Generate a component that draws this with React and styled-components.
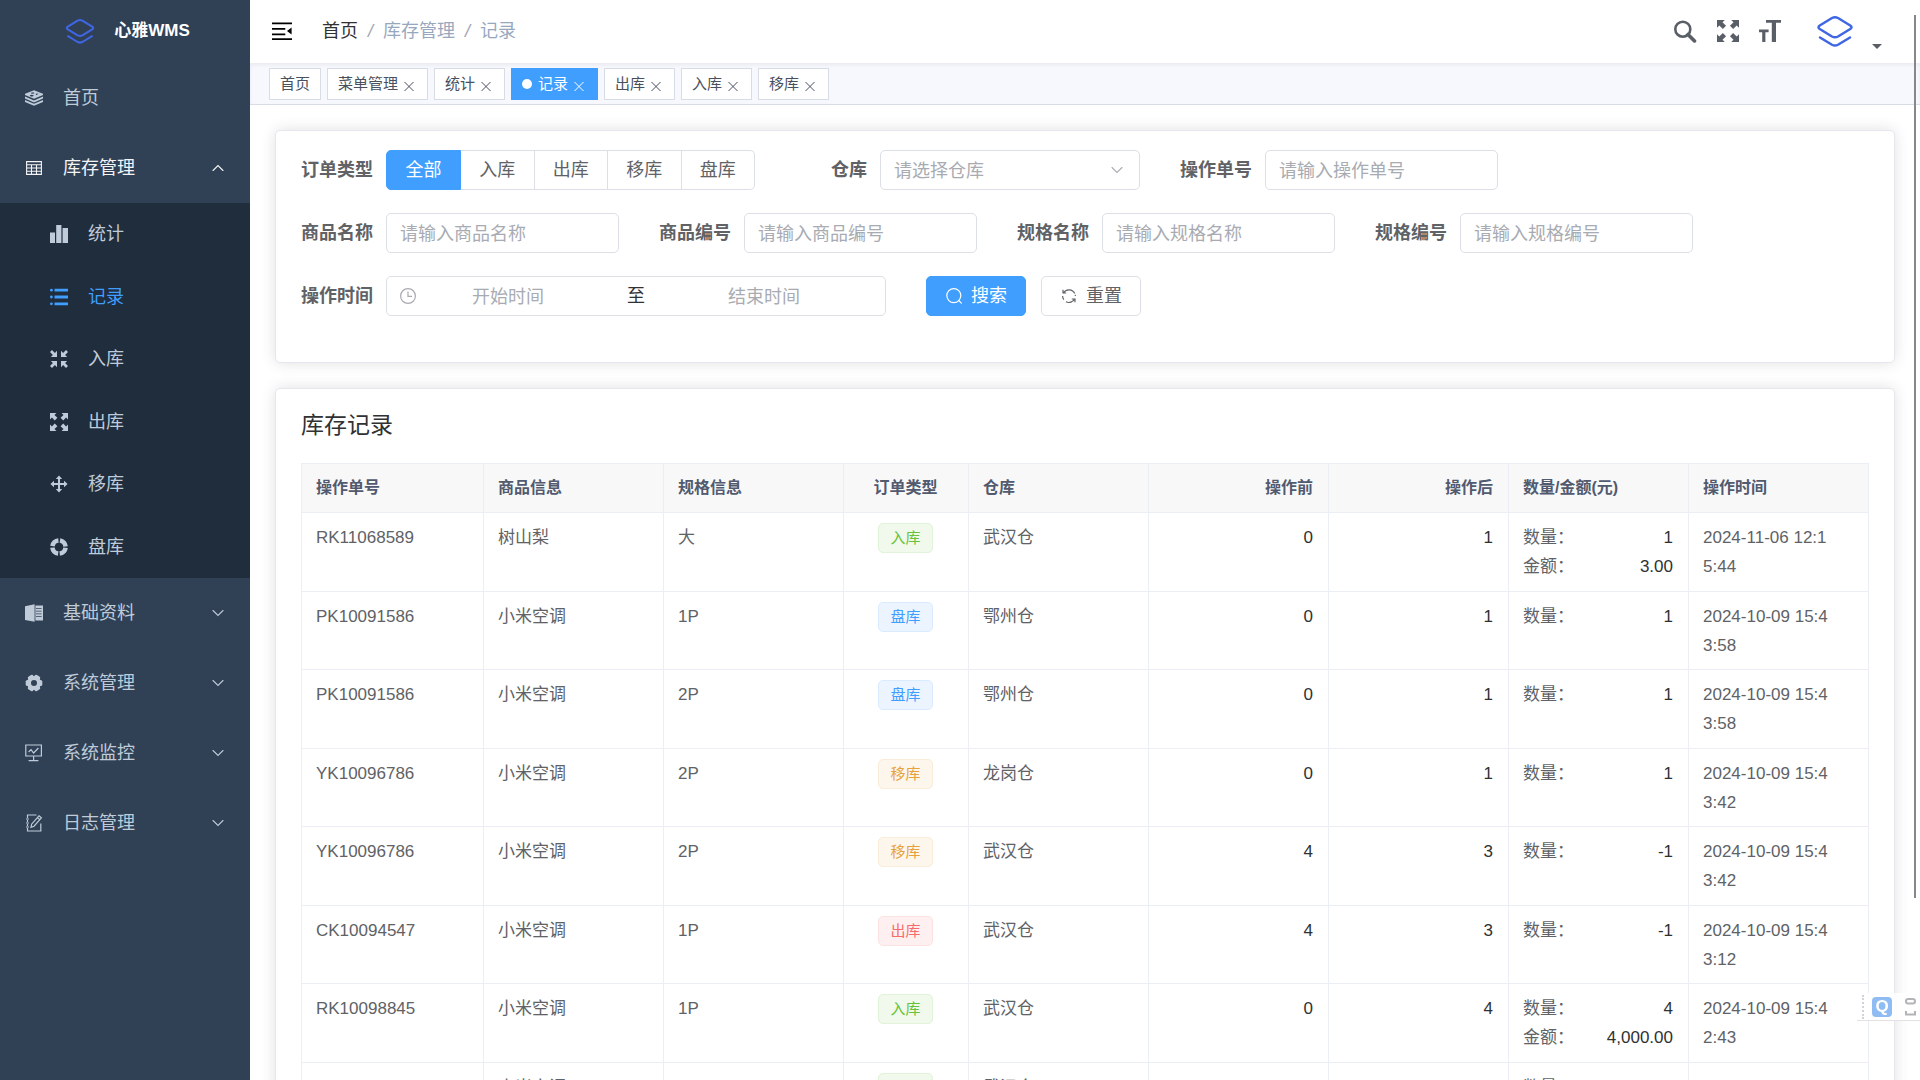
import React from 'react'
import { useState } from 'react';
import styled, { createGlobalStyle } from 'styled-components';

const GlobalStyle = createGlobalStyle`
  * {
    box-sizing: border-box;
  }

  body {
    margin: 0;
    background: #fff;
    color: #303133;
    font-family: "Liberation Sans", "Noto Sans CJK SC", sans-serif;
    font-size: 18px;
    line-height: 28px;
  }

  button, input, select {
    font: inherit;
    color: inherit;
  }

  a {
    color: inherit;
    text-decoration: none;
  }
`;

const Svg = styled.svg`
  display: block;
  flex: none;
  width: ${({ $size }) => $size || 18}px;
  height: ${({ $size }) => $size || 18}px;
  fill: ${({ $line }) => ($line ? 'none' : 'currentColor')};
  stroke: ${({ $line }) => ($line ? 'currentColor' : 'none')};
`;

const LogoSvg = styled(Svg)`
  stroke: #3f66e4;
`;

const LogoMark = ({ size }) => (
  <LogoSvg $size={size} $line viewBox="0 0 40 40" strokeWidth="2" strokeLinejoin="round" strokeLinecap="round" aria-hidden="true">
    <path d="M17.6 9.6 7.8 15.6Q5.8 17 7.8 18.400L17.600 24.400Q20 25.600 22.400 24.400L32.200 18.400Q34.200 17 32.200 15.600L22.400 9.600Q20 8.400 17.600 9.600Z" />
    <path d="M8 25.200 17.600 31Q20 32.200 22.400 31L32 25.200" />
  </LogoSvg>
);

const StackIcon = () => (
  <Svg viewBox="0 0 18 18">
    <path fillRule="evenodd" d="M9 1.200 18 4.800V6L9 9.800 0 6V4.800ZM6 3.800 8.600 3.300 9.200 4.400 6.500 4.800ZM10.600 4.800 13.600 4.400 11.400 6.200ZM5 6.200A2 .8 0 1 0 8.400 6.200 2 .8 0 0 0 5 6.200Z" />
    <path d="M0 7.600 9 11.400 18 7.600V9.600L9 13.400 0 9.600Z" />
    <path d="M0 11 9 14.800 18 11V13L9 16.800 0 13Z" />
  </Svg>
);

const GridIcon = () => (
  <Svg $line viewBox="0 0 18 18" strokeWidth="1.100">
    <path d="M1.600 2.600H16.400V15.400H1.600ZM1.600 5.800H16.400M1.600 9H16.400M1.600 12.200H16.400M6.500 5.800V15.400M11.500 5.800V15.400" />
  </Svg>
);

const BarsIcon = () => (
  <Svg viewBox="0 0 18 18">
    <path d="M0 7.500H5V18H0ZM6.200 0H11.400V18H6.200ZM12.600 3H18V18H12.600Z" />
  </Svg>
);

const ListIcon = () => (
  <Svg viewBox="0 0 18 18">
    <path d="M4.500.8H18V3.600H4.500ZM4.500 7.600H18V10.400H4.500ZM4.500 14.400H18V17.200H4.500Z" />
    <circle cx="1.400" cy="2.200" r="1.400" />
    <circle cx="1.400" cy="9" r="1.400" />
    <circle cx="1.400" cy="15.800" r="1.400" />
  </Svg>
);

const arrowCorner = 'M0 0H6.400L4.500 1.900 7.400 4.800 4.800 7.400 1.900 4.500 0 6.400Z';

const ExpandIcon = ({ size }) => (
  <Svg $size={size} viewBox="0 0 18 18">
    <path d={arrowCorner} />
    <path d={arrowCorner} transform="rotate(90 9 9)" />
    <path d={arrowCorner} transform="rotate(180 9 9)" />
    <path d={arrowCorner} transform="rotate(270 9 9)" />
  </Svg>
);

const shrinkCorner = 'M7 7H.8L2.900 4.900 0 2 2 0 4.900 2.900 7 .8Z';

const ShrinkIcon = () => (
  <Svg viewBox="0 0 18 18">
    <path d={shrinkCorner} />
    <path d={shrinkCorner} transform="rotate(90 9 9)" />
    <path d={shrinkCorner} transform="rotate(180 9 9)" />
    <path d={shrinkCorner} transform="rotate(270 9 9)" />
  </Svg>
);

const MoveIcon = () => (
  <Svg viewBox="0 0 18 18">
    <path d="M9 .4 12.200 4H10V8H14V5.800L17.600 9 14 12.200V10H10V14H12.200L9 17.600 5.800 14H8V10H4V12.200L.4 9 4 5.800V8H8V4H5.800Z" />
  </Svg>
);

const RingIcon = () => (
  <Svg $line viewBox="0 0 18 18">
    <circle cx="9" cy="9" r="6.600" strokeWidth="4.600" strokeDasharray="8.767 1.600" strokeDashoffset="-0.800" />
  </Svg>
);

const BookIcon = () => (
  <Svg viewBox="0 0 18 18">
    <path d="M0 2.200 9.600.2V17.800L0 16Z" />
    <path fillRule="evenodd" d="M10.400 1.600H18V16.400H10.400ZM11 4.200V5H16.600V4.200ZM11 6.800V7.600H16.600V6.800ZM11 9.400V10.200H16.600V9.400ZM11 12V12.800H16.600V12Z" />
  </Svg>
);

const GearIcon = () => (
  <Svg $line viewBox="0 0 18 18">
    <circle cx="9" cy="9" r="5" strokeWidth="4" />
    {[0, 60, 120, 180, 240, 300].map((deg) => (
      <path key={deg} d="M15.600 7.600V10.400" strokeWidth="3.400" strokeLinejoin="round" strokeLinecap="round" transform={`rotate(${deg} 9 9)`} />
    ))}
  </Svg>
);

const MonitorIcon = () => (
  <Svg $line viewBox="0 0 18 18" strokeWidth="1.200">
    <path d="M.8 1H16.400V12H.8ZM8.600 12V16.400M3.600 16.600H13.400M3.600 8 6 5.600 8.600 9 13.400 4" />
  </Svg>
);

const NoteIcon = () => (
  <Svg $line viewBox="0 0 18 18" strokeWidth="1.200">
    <path d="M11.500 1H2.500V4M2.500 6V8M2.500 10V12M2.500 14V17H15.800V9.500M1 5H4M1 9H4M1 13H4" />
    <path d="M14 1.800 16.400 3.800 9 12.200 6 13.400 6.600 10.200ZM12.400 3.600 14.800 5.600" />
  </Svg>
);

const Chevron = ({ up }) => (
  <Svg $size={14} $line viewBox="0 0 14 14" strokeWidth="1.100" strokeLinecap="round">
    <path d={up ? 'M2 9.500 7 4.500 12 9.500' : 'M2 4.500 7 9.500 12 4.500'} />
  </Svg>
);

const CloseIcon = () => (
  <Svg $size={16} $line viewBox="0 0 16 16" strokeWidth="1">
    <path d="M3.500 6 12.500 15M12.500 6 3.500 15" />
  </Svg>
);

const FoldIcon = () => (
  <Svg $size={20} viewBox="0 0 20 20">
    <path d="M0 1.400H20V3.200H0ZM0 7H13.300V8.800H0ZM0 12.400H13.300V14.200H0ZM0 17.200H20V19H0ZM19.600 6.600V13.400L15 10Z" />
  </Svg>
);

const MagnifierIcon = () => (
  <Svg $size={24} $line viewBox="0 0 24 24">
    <circle cx="9.800" cy="10.200" r="7.500" strokeWidth="2.600" />
    <path d="M15 15.400 21.500 21.900" strokeWidth="3.600" strokeLinecap="round" />
  </Svg>
);

const FontSizeIcon = () => (
  <Svg $size={22} viewBox="0 0 22 22">
    <path d="M7 0H22V2.800H17V22H12.800V2.800H7ZM0 9.600H9.600V12.200H6.400V22H3.200V12.200H0Z" />
  </Svg>
);

const SearchIcon = () => (
  <Svg $line viewBox="0 0 18 18" strokeWidth="1.200" strokeLinecap="round">
    <circle cx="8.800" cy="8.600" r="7" />
    <path d="M13.800 13.600 16.400 16.200" />
  </Svg>
);

const RefreshIcon = () => (
  <Svg $line viewBox="0 0 18 18" strokeWidth="1.200">
    <path d="M3 2.800V6H6.200M3.400 6A6.400 6.400 0 0 1 14.800 6.600M2.600 9A6.400 6.400 0 0 0 3.800 12.700M15 15.200V12H11.800M14.600 12A6.400 6.400 0 0 1 6 14.800M15.400 9A6.400 6.400 0 0 0 15.200 7.800" />
  </Svg>
);

const ClockIcon = () => (
  <Svg $line viewBox="0 0 18 18" strokeWidth="1.200">
    <circle cx="9" cy="9" r="7.400" />
    <path d="M9 4.600V9.400H13" />
  </Svg>
);

const stockMenu = [
  { label: '统计', icon: <BarsIcon /> },
  { label: '记录', icon: <ListIcon />, active: true },
  { label: '入库', icon: <ShrinkIcon /> },
  { label: '出库', icon: <ExpandIcon /> },
  { label: '移库', icon: <MoveIcon /> },
  { label: '盘库', icon: <RingIcon /> },
];

const closedMenus = [
  { label: '基础资料', icon: <BookIcon /> },
  { label: '系统管理', icon: <GearIcon /> },
  { label: '系统监控', icon: <MonitorIcon /> },
  { label: '日志管理', icon: <NoteIcon /> },
];

const tabs = ['首页', '菜单管理', '统计', '记录', '出库', '入库', '移库'];

const orderTypes = ['全部', '入库', '出库', '移库', '盘库'];

const tagColors = {
  入库: { text: '#67c23a', bg: '#f0f9eb', border: '#e1f3d8' },
  盘库: { text: '#409eff', bg: '#ecf5ff', border: '#d9ecff' },
  移库: { text: '#e6a23c', bg: '#fdf6ec', border: '#faecd8' },
  出库: { text: '#f56c6c', bg: '#fef0f0', border: '#fde2e2' },
};

const records = [
  { no: 'RK11068589', goods: '树山梨', spec: '大', type: '入库', store: '武汉仓', before: 0, after: 1, qty: '1', amount: '3.00', time: '2024-11-06 12:15:44' },
  { no: 'PK10091586', goods: '小米空调', spec: '1P', type: '盘库', store: '鄂州仓', before: 0, after: 1, qty: '1', time: '2024-10-09 15:43:58' },
  { no: 'PK10091586', goods: '小米空调', spec: '2P', type: '盘库', store: '鄂州仓', before: 0, after: 1, qty: '1', time: '2024-10-09 15:43:58' },
  { no: 'YK10096786', goods: '小米空调', spec: '2P', type: '移库', store: '龙岗仓', before: 0, after: 1, qty: '1', time: '2024-10-09 15:43:42' },
  { no: 'YK10096786', goods: '小米空调', spec: '2P', type: '移库', store: '武汉仓', before: 4, after: 3, qty: '-1', time: '2024-10-09 15:43:42' },
  { no: 'CK10094547', goods: '小米空调', spec: '1P', type: '出库', store: '武汉仓', before: 4, after: 3, qty: '-1', time: '2024-10-09 15:43:12' },
  { no: 'RK10098845', goods: '小米空调', spec: '1P', type: '入库', store: '武汉仓', before: 0, after: 4, qty: '4', amount: '4,000.00', time: '2024-10-09 15:42:43' },
  { no: 'RK10098845', goods: '小米空调', spec: '2P', type: '入库', store: '武汉仓', before: 0, after: 4, qty: '4', amount: '4,000.00', time: '2024-10-09 15:42:43' },
];

const TextField = ({ id, label }) => (
  <FormItem>
    <FormLabel htmlFor={id}>{label}</FormLabel>
    <TextInput id={id} type="text" placeholder={`请输入${label}`} />
  </FormItem>
);

const App = () => {
  const [orderType, setOrderType] = useState('全部');

  return (
    <Layout>
      <GlobalStyle />
      <Sidebar>
        <Brand href="#">
          <LogoMark size={40} />
          心雅WMS
        </Brand>
        <nav>
          <MenuLink href="#"><StackIcon />首页</MenuLink>
          <MenuButton type="button" $open aria-expanded="true">
            <GridIcon />
            <span>库存管理</span>
            <Chevron up />
          </MenuButton>
          <SubMenu>
            {stockMenu.map((item) => (
              <SubLink key={item.label} href="#" $active={item.active}>
                {item.icon}
                {item.label}
              </SubLink>
            ))}
          </SubMenu>
          {closedMenus.map((item) => (
            <MenuButton key={item.label} type="button" aria-expanded="false">
              {item.icon}
              <span>{item.label}</span>
              <Chevron />
            </MenuButton>
          ))}
        </nav>
      </Sidebar>

      <Main>
        <Navbar>
          <IconButton type="button" aria-label="折叠菜单" $dark><FoldIcon /></IconButton>
          <Breadcrumb>
            <a href="#">首页</a>
            <i>/</i>
            <span>库存管理</span>
            <i>/</i>
            <span>记录</span>
          </Breadcrumb>
          <Tools>
            <IconButton type="button" aria-label="搜索菜单"><MagnifierIcon /></IconButton>
            <IconButton type="button" aria-label="全屏"><ExpandIcon size={22} /></IconButton>
            <IconButton type="button" aria-label="字体大小"><FontSizeIcon /></IconButton>
            <UserButton type="button" aria-label="用户菜单">
              <LogoMark size={50} />
              <Caret />
            </UserButton>
          </Tools>
        </Navbar>

        <TagsBar>
          {tabs.map((tab) => (
            <PageTag key={tab} $active={tab === '记录'}>
              {tab === '记录' && <Dot />}
              <a href="#">{tab}</a>
              {tab !== '首页' && (
                <CloseButton type="button" aria-label={`关闭${tab}`}><CloseIcon /></CloseButton>
              )}
            </PageTag>
          ))}
        </TagsBar>

        <Content>
          <Card>
            <SearchForm onSubmit={(e) => e.preventDefault()}>
              <FormItem role="radiogroup" aria-labelledby="order-type">
                <FormLabel as="span" id="order-type">订单类型</FormLabel>
                <RadioGroup>
                  {orderTypes.map((type) => (
                    <RadioButton key={type} $checked={type === orderType}>
                      <input
                        type="radio"
                        name="orderType"
                        value={type}
                        checked={type === orderType}
                        onChange={() => setOrderType(type)}
                      />
                      {type}
                    </RadioButton>
                  ))}
                </RadioGroup>
              </FormItem>
              <FormItem>
                <FormLabel htmlFor="warehouse">仓库</FormLabel>
                <SelectBox>
                  <select id="warehouse" defaultValue="">
                    <option value="">请选择仓库</option>
                    <option>武汉仓</option>
                    <option>鄂州仓</option>
                    <option>龙岗仓</option>
                  </select>
                  <Chevron />
                </SelectBox>
              </FormItem>
              <TextField id="order-no" label="操作单号" />
              <TextField id="goods-name" label="商品名称" />
              <TextField id="goods-no" label="商品编号" />
              <TextField id="spec-name" label="规格名称" />
              <TextField id="spec-no" label="规格编号" />
              <FormItem>
                <FormLabel htmlFor="start-time">操作时间</FormLabel>
                <DateRange>
                  <ClockIcon />
                  <input id="start-time" type="text" placeholder="开始时间" />
                  <span>至</span>
                  <input type="text" placeholder="结束时间" aria-label="结束时间" />
                </DateRange>
              </FormItem>
              <Actions>
                <Button type="submit" $primary><SearchIcon />搜索</Button>
                <Button type="reset"><RefreshIcon />重置</Button>
              </Actions>
            </SearchForm>
          </Card>

          <Card>
            <CardTitle>库存记录</CardTitle>
            <Table>
              <colgroup>
                <Col $w={182} />
                <Col $w={180} />
                <Col $w={180} />
                <Col $w={125} />
                <Col $w={180} />
                <Col $w={180} />
                <Col $w={180} />
                <Col $w={180} />
                <Col $w={180} />
              </colgroup>
              <thead>
                <tr>
                  <Th>操作单号</Th>
                  <Th>商品信息</Th>
                  <Th>规格信息</Th>
                  <Th $align="center">订单类型</Th>
                  <Th>仓库</Th>
                  <Th $align="right">操作前</Th>
                  <Th $align="right">操作后</Th>
                  <Th>数量/金额(元)</Th>
                  <Th>操作时间</Th>
                </tr>
              </thead>
              <tbody>
                {records.map((row, index) => (
                  <Row key={index}>
                    <Td>{row.no}</Td>
                    <Td>{row.goods}</Td>
                    <Td>{row.spec}</Td>
                    <Td $align="center"><Tag $color={tagColors[row.type]}>{row.type}</Tag></Td>
                    <Td>{row.store}</Td>
                    <Td $align="right" $strong>{row.before}</Td>
                    <Td $align="right" $strong>{row.after}</Td>
                    <Td>
                      <Pair><span>数量：</span><b>{row.qty}</b></Pair>
                      {row.amount && <Pair><span>金额：</span><b>{row.amount}</b></Pair>}
                    </Td>
                    <Td><Time>{row.time}</Time></Td>
                  </Row>
                ))}
              </tbody>
            </Table>
          </Card>
        </Content>
      </Main>

      <ScrollThumb />
      <ImeBar>
        <ImeGrip />
        <ImeLogo>Q</ImeLogo>
        <ImeKeys $size={20} $line viewBox="0 0 20 20" strokeWidth="2">
          <rect x="6" y="2" width="9" height="4.500" rx="2.200" />
          <path d="M6 14V17.500H15V14" />
        </ImeKeys>
      </ImeBar>
    </Layout>
  )
}

const Layout = styled.div`
  display: flex;
  height: 100vh;
  overflow: hidden;
`;

const Sidebar = styled.aside`
  flex: none;
  width: 250px;
  background: #304156;
  color: #bfcbd9;
`;

const Brand = styled.a`
  display: flex;
  align-items: center;
  justify-content: center;
  gap: 14px;
  height: 63px;
  padding-bottom: 2px;
  color: #fff;
  font-size: 17px;
  font-weight: 700;
`;

const MenuLink = styled.a`
  display: flex;
  align-items: center;
  gap: 20px;
  height: 70px;
  padding: 0 25px;
`;

const MenuButton = styled.button`
  display: flex;
  align-items: center;
  gap: 20px;
  width: 100%;
  height: 70px;
  padding: 0 25px;
  border: 0;
  background: none;
  color: ${({ $open }) => ($open ? '#f4f4f5' : '#bfcbd9')};
  text-align: left;

  span {
    flex: 1;
  }
`;

const SubMenu = styled.div`
  display: grid;
  grid-template-rows: repeat(6, 1fr);
  height: 375px;
  background: #1f2d3d;
`;

const SubLink = styled.a`
  display: flex;
  align-items: center;
  gap: 20px;
  padding-left: 50px;
  color: ${({ $active }) => ($active ? '#409eff' : '#bfcbd9')};
`;

const Main = styled.main`
  flex: 1;
  min-width: 0;
  overflow-y: auto;
  scrollbar-width: none;
`;

const Navbar = styled.header`
  display: flex;
  align-items: center;
  height: 63px;
  padding: 0 38px 2px 22px;
  background: #fff;
`;

const IconButton = styled.button`
  padding: 0;
  border: 0;
  background: none;
  color: ${({ $dark }) => ($dark ? '#000' : '#5a5e66')};
  cursor: pointer;
`;

const Breadcrumb = styled.nav`
  display: flex;
  align-items: center;
  gap: 10px;
  margin-left: 30px;
  color: #97a8be;

  a {
    color: #303133;
  }

  i {
    color: #a0a6b0;
  }
`;

const Tools = styled.div`
  display: flex;
  align-items: center;
  gap: 20px;
  margin-left: auto;
`;

const UserButton = styled.button`
  display: flex;
  align-items: flex-end;
  gap: 12px;
  margin-left: 9px;
  padding: 0;
  border: 0;
  background: none;
`;

const Caret = styled.span`
  margin-bottom: 7px;
  border: 5px solid transparent;
  border-top-color: #5a5e66;
  border-bottom: 0;
`;

const TagsBar = styled.div`
  display: flex;
  gap: 6px;
  height: 42px;
  padding: 5px 19px;
  border-bottom: 1px solid #d8dce5;
  background: #f6f8fd;
  box-shadow: inset 0 2px 4px rgba(0, 21, 41, 0.06);
`;

const PageTag = styled.div`
  display: flex;
  align-items: center;
  height: 32px;
  padding: 0 10px;
  border: 1px solid ${({ $active }) => ($active ? '#409eff' : '#d8dce5')};
  background: ${({ $active }) => ($active ? '#409eff' : '#fff')};
  color: ${({ $active }) => ($active ? '#fff' : '#495060')};
  font-size: 15px;
`;

const Dot = styled.span`
  width: 10px;
  height: 10px;
  margin-right: 6px;
  border-radius: 50%;
  background: #fff;
`;

const CloseButton = styled.button`
  margin-left: 3px;
  padding: 0;
  border: 0;
  background: none;
`;

const Content = styled.div`
  display: flex;
  flex-direction: column;
  gap: 25px;
  padding: 25px;
`;

const Card = styled.section`
  padding: 19px 26px 25px 25px;
  border: 1px solid #e4e7ed;
  border-radius: 5px;
  background: #fff;
  box-shadow: 0 0 15px rgba(0, 0, 0, 0.12);
`;

const SearchForm = styled.form`
  display: flex;
  flex-wrap: wrap;
  row-gap: 23px;
  padding-bottom: 21px;
`;

const FormItem = styled.div`
  display: flex;
  margin-right: 40px;
`;

const FormLabel = styled.label`
  width: 85px;
  padding-right: 13px;
  color: #606266;
  font-weight: 700;
  line-height: 40px;
  text-align: right;
  white-space: nowrap;
`;

const RadioGroup = styled.div`
  display: grid;
  grid-template-columns: 75px repeat(4, 1fr);
  width: 369px;
`;

const RadioButton = styled.label`
  position: relative;
  height: 40px;
  border: 1px solid ${({ $checked }) => ($checked ? '#409eff' : '#dcdfe6')};
  border-left-width: ${({ $checked }) => ($checked ? '1px' : '0')};
  background: ${({ $checked }) => ($checked ? '#409eff' : '#fff')};
  color: ${({ $checked }) => ($checked ? '#fff' : '#606266')};
  line-height: 38px;
  text-align: center;
  cursor: pointer;

  &:first-child {
    border-radius: 5px 0 0 5px;
  }

  &:last-child {
    border-radius: 0 5px 5px 0;
  }

  input {
    position: absolute;
    opacity: 0;
  }
`;

const TextInput = styled.input`
  width: 233px;
  height: 40px;
  padding: 2px 13px 0;
  border: 1px solid #dcdfe6;
  border-radius: 5px;
  background: #fff;
  outline: none;

  &::placeholder {
    color: #a8abb2;
  }
`;

const SelectBox = styled.div`
  position: relative;
  width: 260px;
  color: #a8abb2;

  select {
    width: 100%;
    height: 40px;
    padding: 2px 13px 0;
    border: 1px solid #dcdfe6;
    border-radius: 5px;
    background: #fff;
    appearance: none;
    outline: none;
  }

  svg {
    position: absolute;
    top: 13px;
    right: 16px;
    pointer-events: none;
  }
`;

const DateRange = styled.div`
  display: flex;
  align-items: center;
  width: 500px;
  height: 40px;
  padding: 0 30px 0 12px;
  border: 1px solid #dcdfe6;
  border-radius: 5px;
  color: #a8abb2;

  input {
    flex: 1;
    min-width: 0;
    padding: 2px 0 0;
    border: 0;
    background: none;
    outline: none;
    text-align: center;
  }

  input::placeholder {
    color: #a8abb2;
  }

  span {
    width: 74px;
    color: #303133;
    text-align: center;
  }
`;

const Actions = styled.div`
  display: flex;
  gap: 15px;
`;

const Button = styled.button`
  display: flex;
  align-items: center;
  justify-content: center;
  gap: 8px;
  height: 40px;
  padding: 0 18px;
  border: 1px solid ${({ $primary }) => ($primary ? '#409eff' : '#dcdfe6')};
  border-radius: 5px;
  background: ${({ $primary }) => ($primary ? '#409eff' : '#fff')};
  color: ${({ $primary }) => ($primary ? '#fff' : '#606266')};
  cursor: pointer;
`;

const CardTitle = styled.h2`
  margin: 0 0 21px;
  font-size: 23px;
  font-weight: 400;
  line-height: 34px;
`;

const Table = styled.table`
  width: 100%;
  table-layout: fixed;
  border-collapse: separate;
  border-spacing: 0;
  border: solid #ebeef5;
  border-width: 1px 0 0 1px;
  color: #606266;
  font-size: 17px;
`;

const Col = styled.col`
  width: ${({ $w }) => $w}px;
`;

const Th = styled.th`
  height: 49px;
  padding: 0 15px 0 14px;
  border: solid #ebeef5;
  border-width: 0 1px 1px 0;
  background: #f8f8f9;
  color: #515a6e;
  font-size: 16px;
  font-weight: 700;
  text-align: ${({ $align }) => $align || 'left'};
`;

const Row = styled.tr`
  height: 78px;

  &:nth-child(odd) {
    height: 79px;
  }
`;

const Td = styled.td`
  padding: 10px 15px 9px 14px;
  border: solid #ebeef5;
  border-width: 0 1px 1px 0;
  color: ${({ $strong }) => ($strong ? '#303133' : 'inherit')};
  line-height: 29px;
  text-align: ${({ $align }) => $align || 'left'};
  vertical-align: top;
`;

const Tag = styled.span`
  display: inline-block;
  height: 30px;
  padding: 0 11px;
  border: 1px solid ${({ $color }) => $color.border};
  border-radius: 5px;
  background: ${({ $color }) => $color.bg};
  color: ${({ $color }) => $color.text};
  font-size: 15px;
  line-height: 28px;
  vertical-align: top;
`;

const Pair = styled.div`
  display: flex;
  justify-content: space-between;
  height: 29px;

  b {
    color: #303133;
    font-weight: 400;
  }
`;

const Time = styled.time`
  display: block;
  max-width: 132px;
  word-break: break-all;
`;

const ScrollThumb = styled.div`
  position: fixed;
  top: 15px;
  right: 4px;
  bottom: 182px;
  width: 2px;
  background: #86878a;
`;

const ImeBar = styled.div`
  position: fixed;
  right: 0;
  bottom: 59px;
  display: flex;
  align-items: center;
  gap: 8px;
  height: 28px;
  padding-left: 5px;
  border-bottom: 1px solid #e2e2e4;
  background: rgba(255, 255, 255, 0.85);
`;

const ImeGrip = styled.span`
  height: 24px;
  border-left: 2px dotted #d4d4d8;
`;

const ImeLogo = styled.span`
  width: 20px;
  height: 20px;
  border-radius: 4px;
  background: #8fbdf3;
  color: #fff;
  font-size: 17px;
  font-weight: 700;
  line-height: 20px;
  text-align: center;
`;

const ImeKeys = styled(Svg)`
  stroke: #b4b4b8;
`;

export default App;
